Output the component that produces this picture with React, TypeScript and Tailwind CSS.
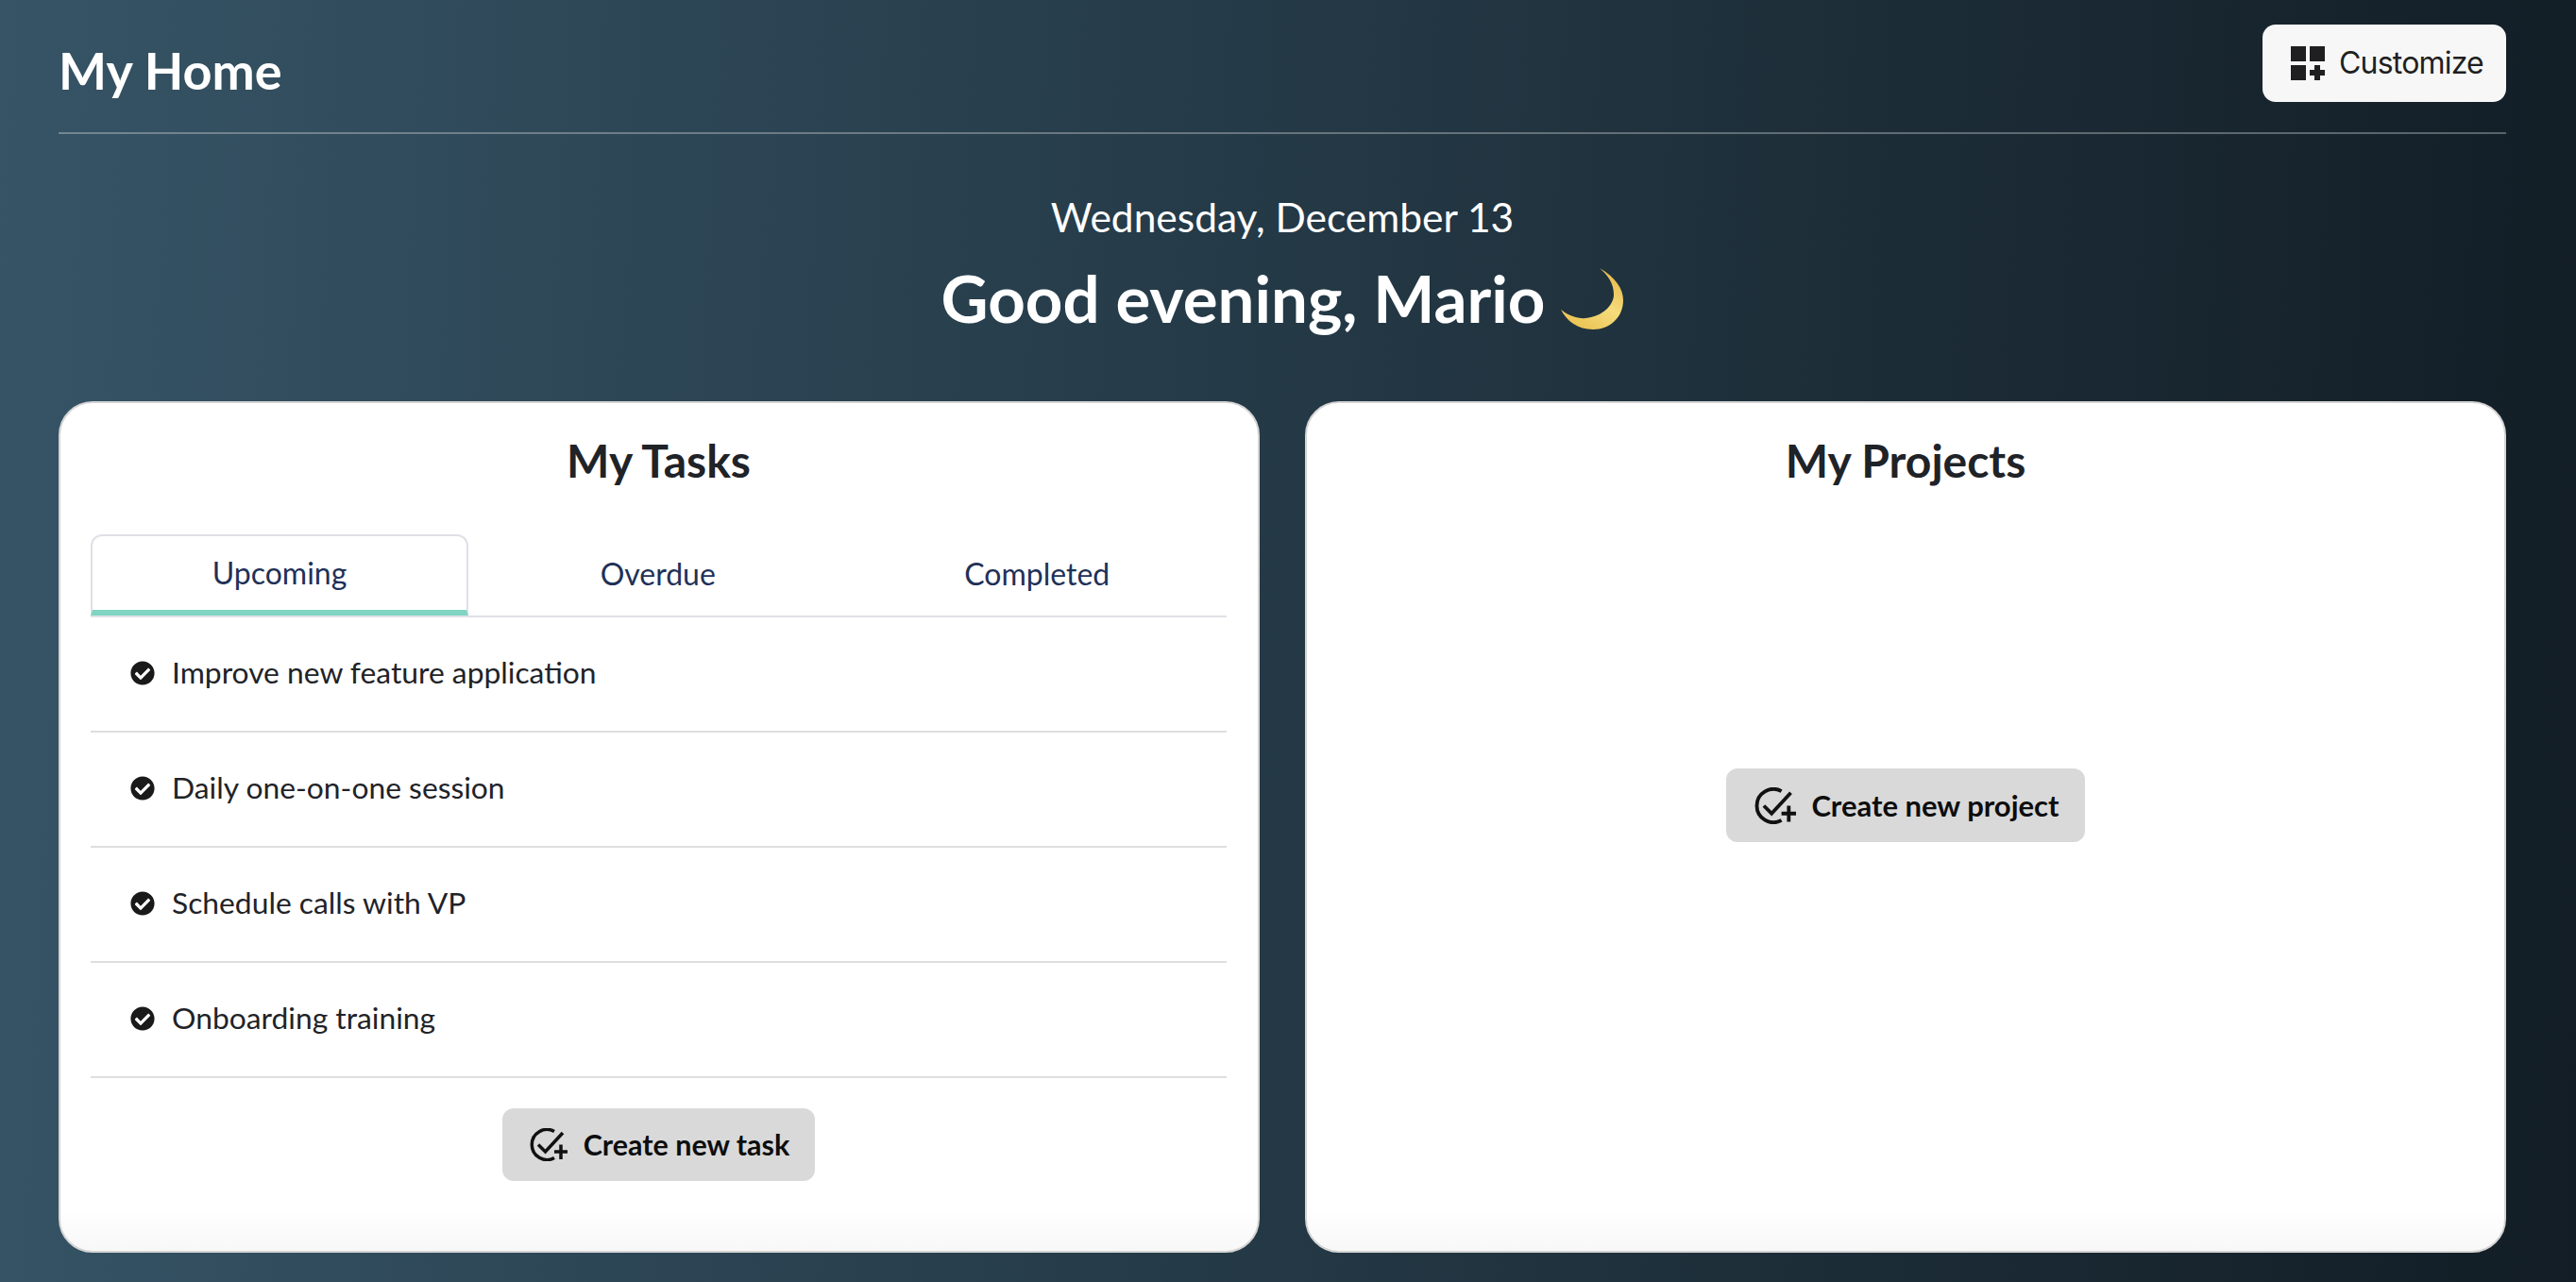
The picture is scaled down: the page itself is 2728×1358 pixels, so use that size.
import { FC } from 'react';
import { FaCheckCircle } from 'react-icons/fa';

const tasks = [
  'Improve new feature application',
  'Daily one-on-one session',
  'Schedule calls with VP',
  'Onboarding training',
];

const AddWidgetIcon: FC = () => (
  <svg width="36" height="36" viewBox="0 0 36 36" fill="#1f1f21" className="shrink-0">
    <rect x="0" y="0" width="16" height="16" />
    <rect x="20" y="0" width="16" height="16" />
    <rect x="0" y="20" width="16" height="16" />
    <path d="M25 20h6v5h5v6h-5v5h-6v-5h-5v-6h5z" />
  </svg>
);

const TaskAddIcon: FC<{ width: number; height: number }> = ({ width, height }) => (
  <svg width={width} height={height} viewBox="0 0 40 35" fill="none" stroke="#111" strokeWidth="3.5" className="shrink-0">
    <path d="M26 3.500A16 16 0 1 0 26 31.500" />
    <path d="M9 17.500l7.500 7.500L35 5" />
    <path d="M33 17.500V33M26 25h14" />
  </svg>
);

const MoonIcon: FC = () => (
  <svg width="66" height="65" viewBox="0 0 66 65" className="shrink-0">
    <defs>
      <linearGradient id="moon" x1="0.2" y1="1" x2="0.8" y2="0">
        <stop offset="0" stopColor="#e9c04f" />
        <stop offset="0.5" stopColor="#f6dc7c" />
        <stop offset="1" stopColor="#e5b94a" />
      </linearGradient>
    </defs>
    <path
      d="M41 0C58 10 66 22 66 34C66 52 52 65 34 65C18 65 6 56 0 44C10 52 22 55 32 52C46 49 56 38 56 28C56 16 50 8 41 0Z"
      fill="url(#moon)"
    />
  </svg>
);

export default function App() {
  return (
    <div className="flex h-[1358px] w-[2728px] flex-col overflow-hidden bg-[linear-gradient(93deg,#365466_0%,#121d25_100%)] pr-[74px] pl-[62px] font-['Lato',sans-serif]">
      <header className="flex h-[142px] items-start justify-between border-b-2 border-white/30">
        <h1 className="mt-[41px] text-[54px] leading-[68px] font-bold text-white">My Home</h1>
        <button className="mt-[26px] flex h-[82px] w-[258px] items-center gap-[15px] rounded-[14px] bg-[#f7f7f7] pl-[30px] font-['Inter',sans-serif] text-[32px] tracking-[-0.8px] text-[#1f1f21]">
          <AddWidgetIcon />
          Customize
        </button>
      </header>

      <div className="flex h-[283px] flex-col items-center text-white">
        <p className="mt-[60px] text-[42.500px] leading-[56px]">Wednesday, December 13</p>
        <div className="mt-[13px] flex items-center gap-[17px]">
          <h2 className="text-[69px] leading-[90px] font-bold">Good evening, Mario</h2>
          <MoonIcon />
        </div>
      </div>

      <div className="grid h-[902px] grid-cols-2 gap-[48px]">
        <section className="flex flex-col rounded-[36px] border-2 border-[#d4d4d4] bg-gradient-to-b from-white from-95% to-[#f8f8f8] pr-[33px] pl-[32px]">
          <h3 className="mt-[29px] text-center text-[48px] leading-[64px] font-bold text-[#1f2328]">
            My Tasks
          </h3>
          <div className="mt-[46px] flex h-[88px] border-b-2 border-[#dfe1e6] text-[32px] text-[#1f3157]">
            <div className="flex w-[400px] flex-none items-center justify-center rounded-t-[12px] border-x-2 border-t-2 border-b-[6px] border-[#dfe1e6] border-b-[#80d5c2]">
              Upcoming
            </div>
            <div className="flex flex-1 items-center justify-center pb-[2px]">Overdue</div>
            <div className="flex flex-1 items-center justify-center pb-[2px]">Completed</div>
          </div>
          {tasks.map((task) => (
            <div
              key={task}
              className="flex h-[122px] items-center gap-[18px] border-b-2 border-[#dedede] pb-[3px] pl-[42px] text-[31.800px] text-[#1f2328]"
            >
              <FaCheckCircle className="h-[26px] w-[26px] text-[#1a1a1a]" />
              {task}
            </div>
          ))}
          <div className="mt-[32px] flex justify-center">
            <button className="flex h-[77px] items-center gap-[17px] rounded-[12px] bg-[#d9d9d9] pr-[27px] pl-[29px] text-[30.500px] font-bold text-[#0d0d0d]">
              <TaskAddIcon width={40} height={35} />
              Create new task
            </button>
          </div>
        </section>

        <section className="flex flex-col rounded-[36px] border-2 border-[#d4d4d4] bg-gradient-to-b from-white from-95% to-[#f8f8f8] px-[33px]">
          <h3 className="mt-[29px] text-center text-[48px] leading-[64px] font-bold text-[#1f2328]">
            My Projects
          </h3>
          <div className="mt-[294px] flex justify-center">
            <button className="flex h-[78px] items-center gap-[16px] rounded-[12px] bg-[#d9d9d9] pr-[27px] pl-[30px] text-[31px] font-bold text-[#0d0d0d]">
              <TaskAddIcon width={44} height={39} />
              Create new project
            </button>
          </div>
        </section>
      </div>
    </div>
  );
}
